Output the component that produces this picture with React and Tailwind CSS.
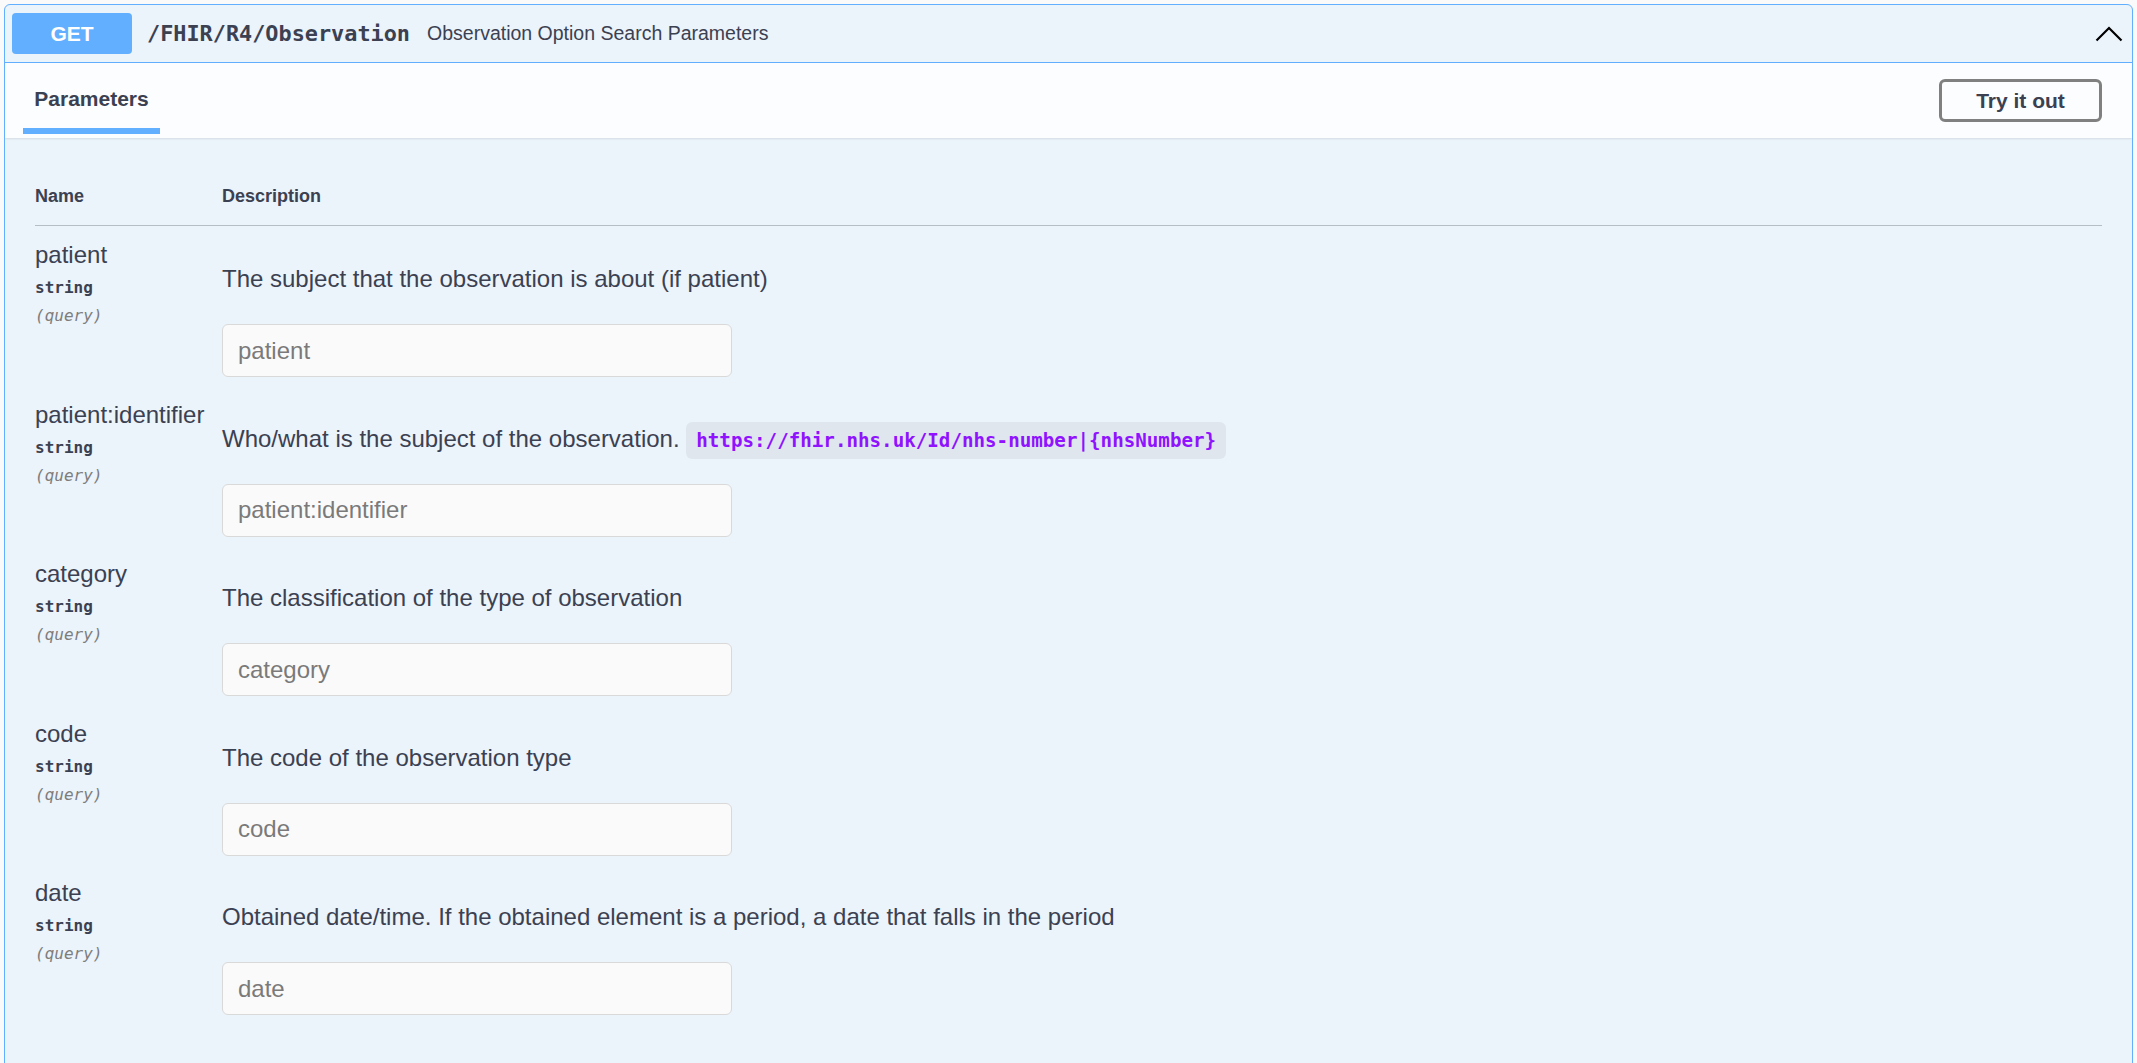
const params = [
  {
    name: "patient",
    desc: "The subject that the observation is about (if patient)",
  },
  {
    name: "patient:identifier",
    desc: "Who/what is the subject of the observation.",
    code: "https://fhir.nhs.uk/Id/nhs-number|{nhsNumber}",
  },
  { name: "category", desc: "The classification of the type of observation" },
  { name: "code", desc: "The code of the observation type" },
  {
    name: "date",
    desc: "Obtained date/time. If the obtained element is a period, a date that falls in the period",
  },
];

function ParamRow({ p }) {
  return (
    <div className="flex h-[159.5px] pt-[15px]">
      <div className="w-[187px] shrink-0">
        <div className="text-[24px] leading-[27px] text-[#3b4151] whitespace-nowrap">{p.name}</div>
        <div className="mt-[6px] font-['DejaVu_Sans_Mono',monospace] text-[16px] font-bold leading-[28px] text-[#3b4151]">
          string
        </div>
        <div className="font-['DejaVu_Sans_Mono',monospace] text-[16px] italic leading-[28px] text-[#7d7d7d]">
          (query)
        </div>
      </div>
      <div className="flex-1">
        <div className="mt-[24px] h-[27px] text-[24px] leading-[27px] text-[#3b4151] whitespace-nowrap">
          {p.desc}
          {p.code && (
            <>
              {" "}
              <span className="rounded-[6px] bg-[rgba(0,0,0,0.05)] px-[10px] py-[7px] font-['DejaVu_Sans_Mono',monospace] text-[19.2px] font-bold leading-none text-[#9012fe]">
                {p.code}
              </span>
            </>
          )}
        </div>
        <input
          type="text"
          placeholder={p.name}
          className="mt-[32px] block h-[53px] w-[510px] rounded-[6px] border border-[#d9d9d9] bg-[#fafafa] pl-[15px] text-[24px] text-[#3b4151] outline-none placeholder:text-[#7a7a7a]"
        />
      </div>
    </div>
  );
}

export default function App() {
  return (
    <div className="min-h-screen bg-[#fafafa] p-[4px] font-['Liberation_Sans',Arial,sans-serif] text-[#3b4151]">
      <div className="overflow-hidden rounded-[6px] border border-[#61affe] bg-[#ebf3fb]">
        {/* summary */}
        <div className="flex h-[58px] items-center border-b border-[#61affe] pl-[7px] pr-[9px]">
          <span className="flex h-[41px] w-[120px] items-center justify-center rounded-[4px] bg-[#61affe] text-[21px] font-bold text-white">
            GET
          </span>
          <span className="ml-[15px] font-['DejaVu_Sans_Mono',monospace] text-[21.85px] font-bold leading-none text-[#3b4151]">
            /FHIR/R4/Observation
          </span>
          <span className="ml-[17px] text-[19.5px] leading-none text-[#3b4151]">
            Observation Option Search Parameters
          </span>
          <svg
            className="ml-auto"
            width="28"
            height="16"
            viewBox="0 0 28 16"
            fill="none"
            stroke="#000"
            strokeWidth="2.2"
          >
            <path d="M1.5 14.5 L14 2 L26.5 14.5" />
          </svg>
        </div>

        {/* tab header */}
        <div className="relative z-10 flex h-[75px] items-start justify-between bg-white/80 pl-[18px] pr-[30px] shadow-[0_1px_2px_rgba(0,0,0,0.1)]">
          <div className="flex w-[137px] flex-col items-center pt-[24px]">
            <span className="text-[21px] font-bold leading-[24px] text-[#3b4151]">Parameters</span>
            <span className="mt-[17px] block h-[6px] w-full bg-[#61affe]" />
          </div>
          <button className="mt-[16px] flex h-[43px] w-[163px] items-center justify-center rounded-[6px] border-[3px] border-[#808080] bg-transparent text-[21px] font-bold text-[#3b4151]">
            Try it out
          </button>
        </div>

        {/* parameters table */}
        <div className="px-[30px] pt-[30px] pb-[60px]">
          <div className="flex border-b border-[rgba(59,65,81,0.3)] pt-[17.5px] pb-[18.5px] text-[18px] font-bold leading-[21px] text-[#3b4151]">
            <div className="w-[187px]">Name</div>
            <div>Description</div>
          </div>
          {params.map((p) => (
            <ParamRow key={p.name} p={p} />
          ))}
        </div>
      </div>
    </div>
  );
}
